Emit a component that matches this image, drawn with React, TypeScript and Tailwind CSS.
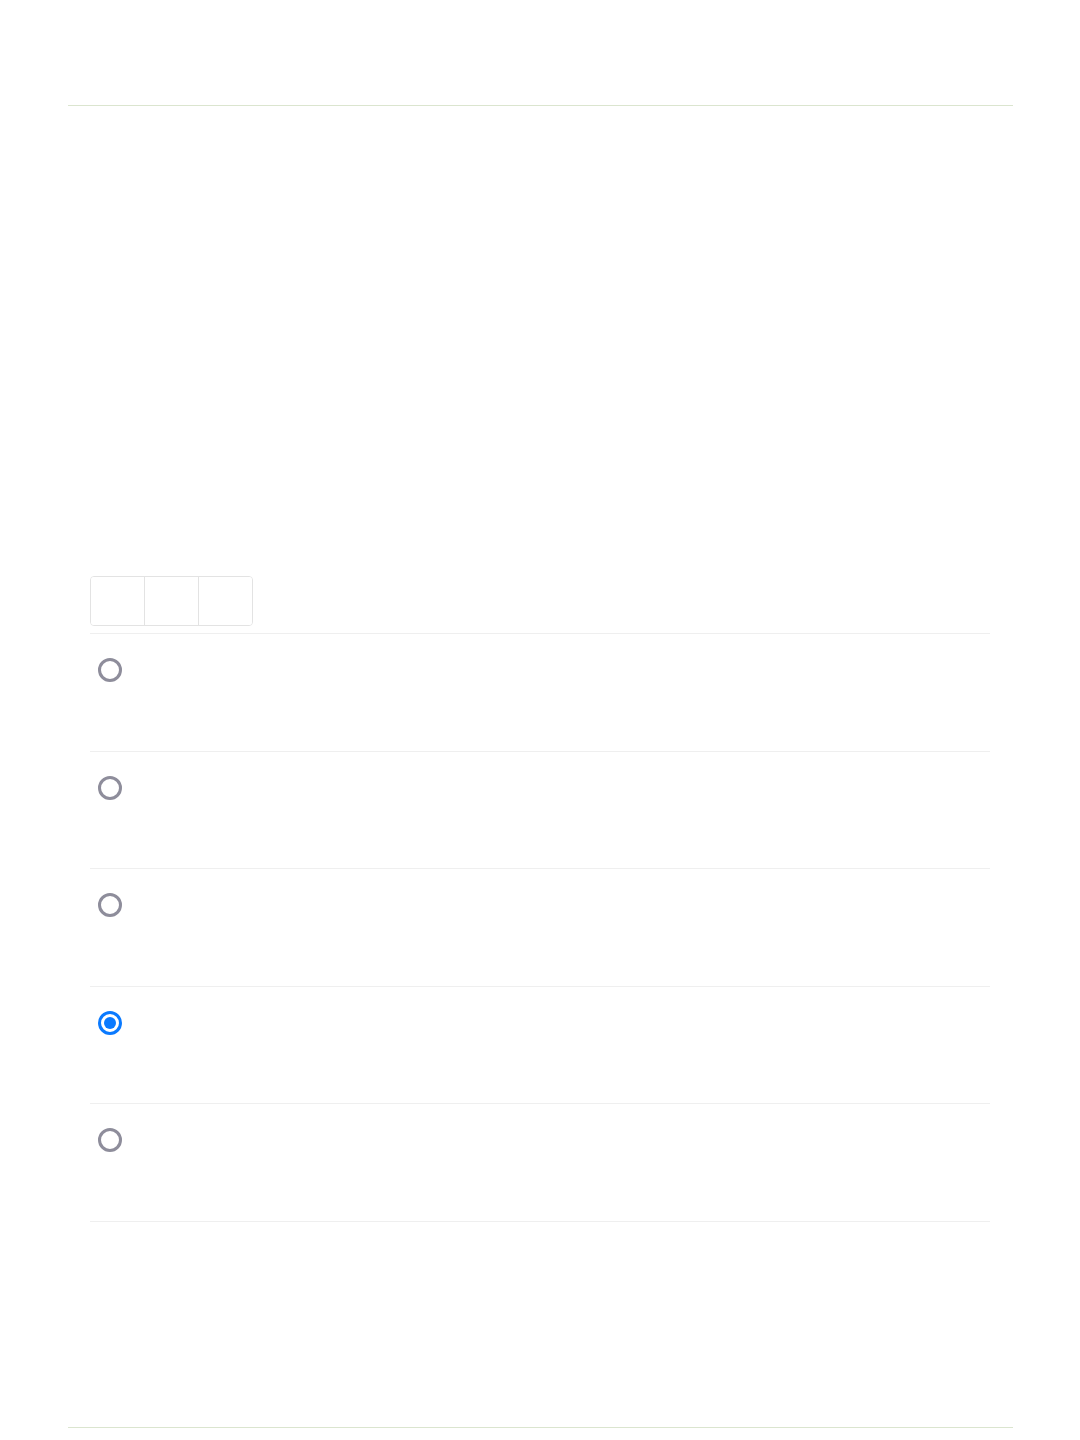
import React from "react";

const rows = [false, false, false, true, false];

function Radio({ checked }: { checked: boolean }) {
  if (checked) {
    return (
      <span className="flex h-6 w-6 items-center justify-center rounded-full border-[3px] border-[#0a7aff] bg-white">
        <span className="h-3 w-3 rounded-full bg-[#0a7aff]" />
      </span>
    );
  }
  return <span className="block h-6 w-6 rounded-full border-[3px] border-[#8e8d9b] bg-white" />;
}

export default function App() {
  return (
    <div className="flex h-[1440px] flex-col bg-white font-['Inter',sans-serif]">
      {/* header */}
      <header className="mx-auto h-[106px] w-[945px] border-b border-[#dbe5cf]" />

      {/* main */}
      <main className="mx-auto w-[900px] flex-1 pt-[470px]">
        <div className="flex h-[50px] w-[163px] overflow-hidden rounded-[4px] border border-[#e3e3e3]">
          <button className="h-full flex-1 bg-white" />
          <button className="h-full flex-1 border-x border-[#e3e3e3] bg-white" />
          <button className="h-full flex-1 bg-white" />
        </div>

        <ul className="mt-[7px] border-t border-[#efefef]">
          {rows.map((checked, i) => (
            <li key={i} className="h-[117.6px] border-b border-[#efefef] px-2 pt-6">
              <Radio checked={checked} />
            </li>
          ))}
        </ul>
      </main>

      {/* footer */}
      <footer className="mx-auto h-[13px] w-[945px] border-t border-[#dbe5cf]" />
    </div>
  );
}
